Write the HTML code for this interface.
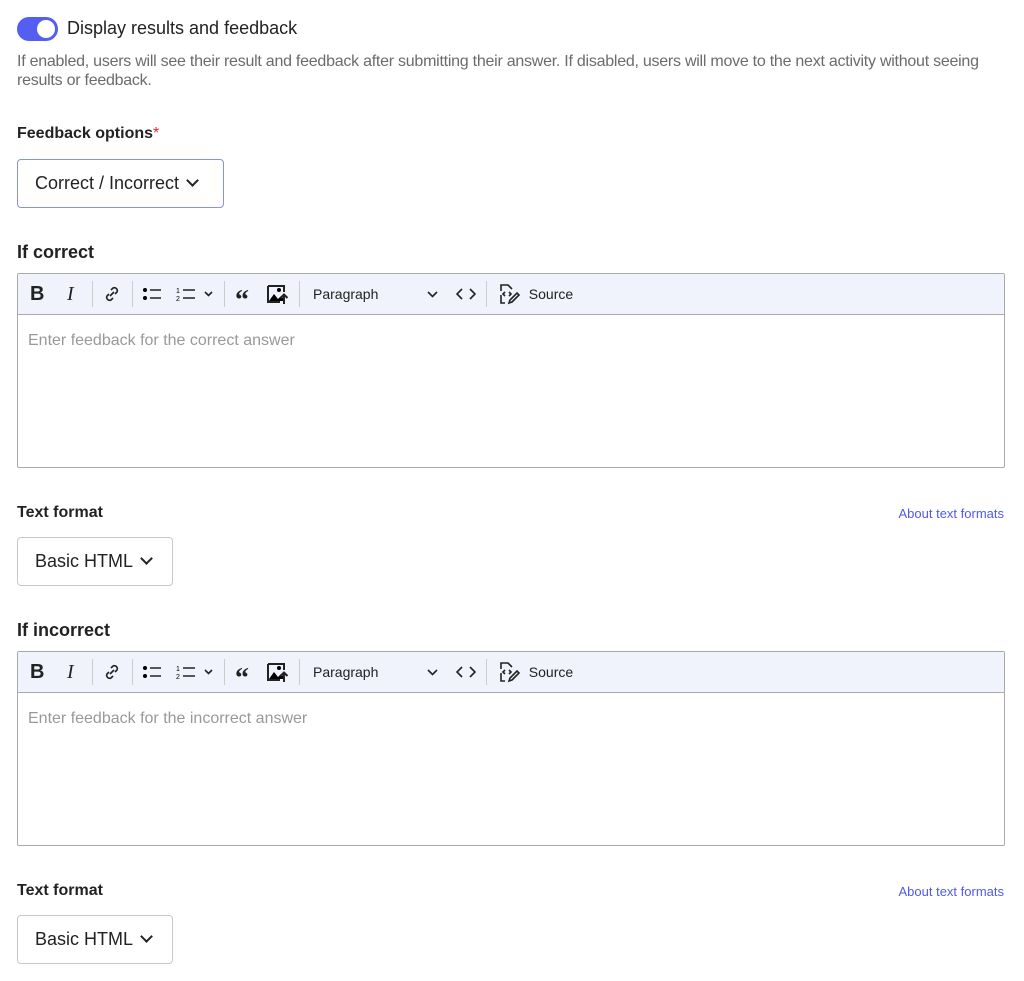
<!DOCTYPE html><html><head><style>
body{margin:0;width:1024px;height:981px;background:#fff;font-family:"Liberation Sans",sans-serif;color:#222;position:relative;overflow:hidden}
.a{position:absolute}
.tog{left:17px;top:17px;width:41px;height:24px;border-radius:12px;background:#545ef0}
.tog:after{content:"";position:absolute;right:3px;top:3px;width:18px;height:18px;border-radius:50%;background:#fff}
.lbl{font-weight:bold;font-size:16px}
.sel{left:17px;border:1px solid #c8c8c8;border-radius:4px;font-size:18px;line-height:47px;padding-left:17px;box-sizing:border-box;height:49px}
.chev{display:inline-block;width:7px;height:7px;border-right:2px solid #222;border-bottom:2px solid #222;transform:rotate(45deg);margin-left:9px;position:relative;top:-4px}
.ed{left:17px;width:988px;height:195px;border:1px solid #aaa;box-sizing:border-box;border-radius:2px}
.tb{height:40px;background:#f0f2fc;border-bottom:1px solid #aaa;position:relative}
.tb .i{position:absolute;top:0;height:40px;display:flex;align-items:center;font-size:14px;color:#222}
.sep{position:absolute;top:7px;width:1px;height:26px;background:#ccc}
.ph{position:absolute;left:10px;top:58px;color:#999;font-size:16px}
.link{right:20px;font-size:13px;color:#4f5ae8}
</style></head><body>
<div class="a tog"></div>
<div class="a" style="left:67px;top:18px;font-size:18px">Display results and feedback</div>
<div class="a" style="left:17px;top:52px;width:1000px;font-size:16px;letter-spacing:-0.25px;line-height:19px;color:#6b6b6b">If enabled, users will see their result and feedback after submitting their answer. If disabled, users will move to the next activity without seeing results or feedback.</div>
<div class="a lbl" style="left:17px;top:125px">Feedback options<span style="color:#e22;font-weight:normal">*</span></div>
<div class="a sel" style="top:159px;width:207px;border-color:#8a8fe8">Correct / Incorrect<span class="chev"></span></div>

<div class="a lbl" style="left:17px;top:242px;font-size:18px">If correct</div>
<div class="a ed" style="top:273px" id="e1"></div>
<div class="a lbl" style="left:17px;top:504px">Text format</div>
<div class="a link" style="top:506px">About text formats</div>
<div class="a sel" style="top:537px;width:156px">Basic HTML<span class="chev"></span></div>

<div class="a lbl" style="left:17px;top:620px;font-size:18px">If incorrect</div>
<div class="a ed" style="top:651px" id="e2"></div>
<div class="a lbl" style="left:17px;top:882px">Text format</div>
<div class="a link" style="top:884px">About text formats</div>
<div class="a sel" style="top:915px;width:156px">Basic HTML<span class="chev"></span></div>
<script>
var tb='<div class="tb">'+
'<div class="i" style="left:12px;font-weight:bold;font-size:20px">B</div>'+
'<div class="i" style="left:49px;font-style:italic;font-size:20px;font-family:Liberation Serif">I</div>'+
'<div class="sep" style="left:74px"></div>'+
'<div class="i" style="left:85px"><svg width="18" height="18" viewBox="0 0 18 18" fill="none" stroke="#222" stroke-width="1.6"><path d="M7 11l4-4M8 5l2-2a3 3 0 014 4l-2 2M10 13l-2 2a3 3 0 01-4-4l2-2"/></svg></div>'+
'<div class="sep" style="left:114px"></div>'+
'<div class="i" style="left:124px"><svg width="20" height="16"><circle cx="3" cy="4" r="2"/><circle cx="3" cy="12" r="2"/><path d="M8 4h11M8 12h11" stroke="#222" stroke-width="1.6"/></svg></div>'+
'<div class="i" style="left:158px"><svg width="38" height="16"><text x="0" y="7" font-size="7" font-family="Liberation Sans">1</text><text x="0" y="15" font-size="7" font-family="Liberation Sans">2</text><path d="M7 4h12M7 12h12" stroke="#222" stroke-width="1.6"/><path d="M29 6l3.5 3.5L36 6" fill="none" stroke="#222" stroke-width="1.6"/></svg></div>'+
'<div class="sep" style="left:206px"></div>'+
'<div class="i" style="left:217px;font-weight:bold;font-size:28px;font-family:Liberation Serif;padding-top:14px;height:26px">&#8220;</div>'+
'<div class="i" style="left:249px"><svg width="22" height="20"><path d="M1 2h16v6M1 2v16h12" fill="none" stroke="#222" stroke-width="2"/><path d="M2 17l5-7 4 5 3-3 2 2v3H2z"/><circle cx="12" cy="6" r="2"/><path d="M17 20v-9M13.5 14l3.5-3.5 3.5 3.5" fill="none" stroke="#222" stroke-width="2"/></svg></div>'+
'<div class="sep" style="left:281px"></div>'+
'<div class="i" style="left:295px;font-size:14px">Paragraph</div>'+
'<div class="i" style="left:409px"><svg width="12" height="10"><path d="M1 3l4.5 4.5L10 3" fill="none" stroke="#222" stroke-width="1.6"/></svg></div>'+
'<div class="i" style="left:438px"><svg width="20" height="12"><path d="M6 1L1 6l5 5M14 1l5 5-5 5" fill="none" stroke="#222" stroke-width="1.6"/></svg></div>'+
'<div class="sep" style="left:468px"></div>'+
'<div class="i" style="left:481px"><svg width="22" height="22" fill="none" stroke="#222" stroke-width="1.6"><path d="M2 8V2h7l4 4M2 12v8h4"/><path d="M6 9L4 11l2 2M10 9l2 2-2 2"/><path d="M10 20l1-3 7-7 2 2-7 7z"/></svg>&nbsp;&nbsp;Source</div>'+
'</div>';
document.getElementById('e1').innerHTML=tb+'<div class="ph">Enter feedback for the correct answer</div>';
document.getElementById('e2').innerHTML=tb+'<div class="ph">Enter feedback for the incorrect answer</div>';
</script>
</body></html>
